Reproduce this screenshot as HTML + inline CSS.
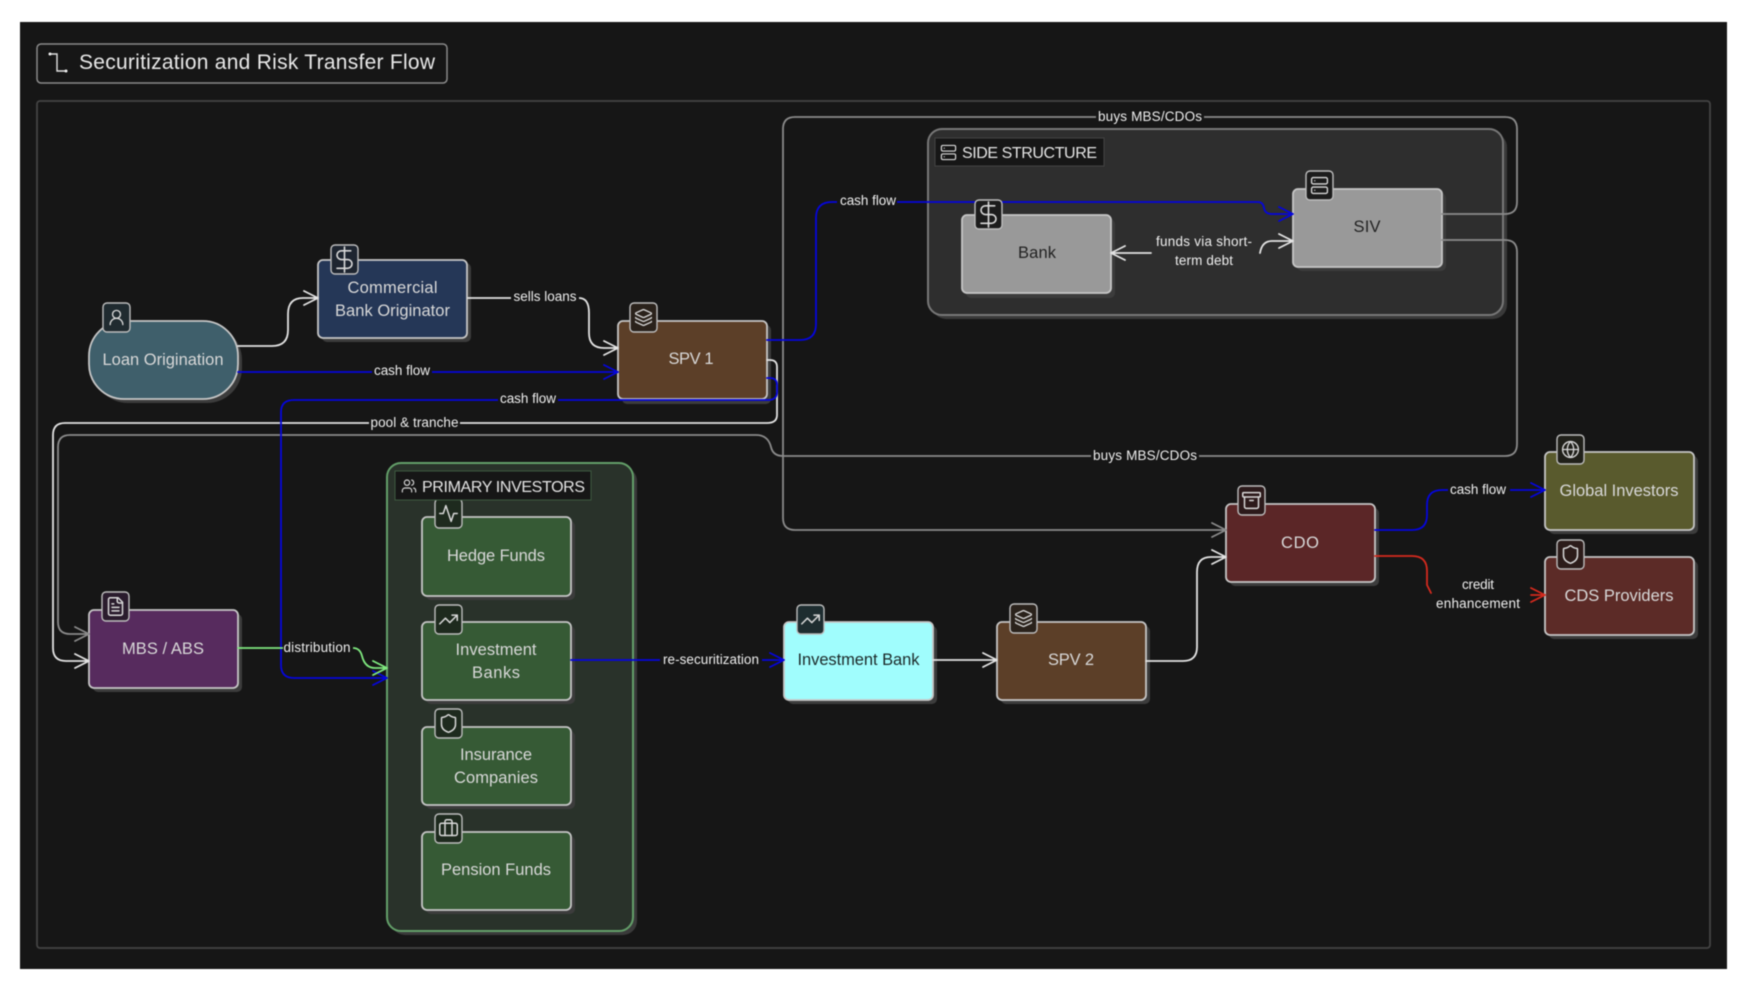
<!DOCTYPE html>
<html lang="en">
<head>
<meta charset="utf-8">
<title>Securitization and Risk Transfer Flow</title>
<style>
html,body{margin:0;padding:0;background:#fff;width:1746px;height:986px;overflow:hidden}
svg{display:block;filter:blur(.6px);font-family:"Liberation Sans",sans-serif}
.e{fill:none;stroke-width:1.800;stroke-linejoin:round;stroke-linecap:round}
.w{stroke:#e2e2e2}.g{stroke:#8a8a8a}.b{stroke:#0505dc}.gr{stroke:#7fe87f}.r{stroke:#d52a1e}
.sh{fill:#3c3c3c}
.n{stroke:#c6c6c6;stroke-width:1.800}
.t{font-size:16.500px;fill:#d8d8d8;text-anchor:middle}
.l{font-size:13.500px;fill:#eee;text-anchor:middle}
.lb{fill:#161616}
.i{fill:none;stroke:#d8d8d8;stroke-width:1.700;stroke-linecap:round;stroke-linejoin:round}
.bd{stroke:#bdbdbd;stroke-width:1.400}
</style>
</head>
<body>
<svg width="1746" height="986" viewBox="0 0 1746 986" xmlns="http://www.w3.org/2000/svg">
<defs>
<symbol id="user" viewBox="0 0 24 24"><circle cx="12" cy="8" r="5"/><path d="M20 21a8 8 0 0 0-16 0"/></symbol>
<symbol id="dollar" viewBox="0 0 24 24"><path d="M12 2v20"/><path d="M17 5H9.500a3.500 3.500 0 0 0 0 7h5a3.500 3.500 0 0 1 0 7H6"/></symbol>
<symbol id="layers" viewBox="0 0 24 24"><path d="M12.830 2.180a2 2 0 0 0-1.660 0L2.600 6.080a1 1 0 0 0 0 1.830l8.580 3.910a2 2 0 0 0 1.660 0l8.580-3.900a1 1 0 0 0 0-1.830z"/><path d="M2 12a1 1 0 0 0 .58.910l8.600 3.910a2 2 0 0 0 1.650 0l8.580-3.900A1 1 0 0 0 22 12"/><path d="M2 17a1 1 0 0 0 .58.910l8.600 3.910a2 2 0 0 0 1.650 0l8.580-3.900A1 1 0 0 0 22 17"/></symbol>
<symbol id="server" viewBox="0 0 24 24"><rect x="2" y="2" width="20" height="8" rx="2"/><rect x="2" y="14" width="20" height="8" rx="2"/><path d="M6 6h.01M6 18h.01"/></symbol>
<symbol id="activity" viewBox="0 0 24 24"><path d="M22 12h-4l-3 9L9 3l-3 9H2"/></symbol>
<symbol id="trend" viewBox="0 0 24 24"><path d="M22 7l-8.500 8.500-5-5L2 17"/><path d="M16 7h6v6"/></symbol>
<symbol id="shield" viewBox="0 0 24 24"><path d="M20 13c0 5-3.500 7.500-7.660 8.950a1 1 0 0 1-.67-.01C7.500 20.500 4 18 4 13V6a1 1 0 0 1 1-1c2 0 4.500-1.200 6.240-2.720a1.170 1.170 0 0 1 1.520 0C14.510 3.810 17 5 19 5a1 1 0 0 1 1 1z"/></symbol>
<symbol id="case" viewBox="0 0 24 24"><path d="M16 20V4a2 2 0 0 0-2-2h-4a2 2 0 0 0-2 2v16"/><rect x="2" y="6" width="20" height="14" rx="2"/></symbol>
<symbol id="file" viewBox="0 0 24 24"><path d="M15 2H6a2 2 0 0 0-2 2v16a2 2 0 0 0 2 2h12a2 2 0 0 0 2-2V7Z"/><path d="M14 2v4a2 2 0 0 0 2 2h4"/><path d="M10 9H8M16 13H8M16 17H8"/></symbol>
<symbol id="archive" viewBox="0 0 24 24"><rect x="2" y="3" width="20" height="5" rx="1"/><path d="M4 8v11a2 2 0 0 0 2 2h12a2 2 0 0 0 2-2V8"/><path d="M10 12h4"/></symbol>
<symbol id="globe" viewBox="0 0 24 24"><circle cx="12" cy="12" r="10"/><path d="M12 2a14.500 14.500 0 0 0 0 20 14.500 14.500 0 0 0 0-20"/><path d="M2 12h20"/></symbol>
<symbol id="users" viewBox="0 0 24 24"><path d="M16 21v-2a4 4 0 0 0-4-4H6a4 4 0 0 0-4 4v2"/><circle cx="9" cy="7" r="4"/><path d="M22 21v-2a4 4 0 0 0-3-3.870"/><path d="M16 3.130a4 4 0 0 1 0 7.750"/></symbol>
</defs>

<!-- panel -->
<rect x="20" y="22" width="1707" height="947" fill="#161616"/>
<rect x="37" y="44" width="410" height="39" rx="4" fill="#161616" stroke="#8a8a8a" stroke-width="1.500"/>
<path d="M50 54H57V71H66" fill="none" stroke="#e0e0e0" stroke-width="1.400"/>
<circle cx="50" cy="54" r="1.500" fill="#eee"/><circle cx="66" cy="71" r="1.500" fill="#eee"/>
<text x="79" y="69" font-size="21" fill="#e8e8e8" textLength="356" lengthAdjust="spacing">Securitization and Risk Transfer Flow</text>
<rect x="37" y="101" width="1673" height="847" rx="3" fill="none" stroke="#444" stroke-width="1.800"/>

<!-- groups -->
<rect x="932" y="133" width="575" height="186" rx="14" fill="#3a3a3a"/>
<rect x="928" y="129" width="575" height="186" rx="14" fill="#2e2e2e" stroke="#777" stroke-width="2"/>
<rect x="391" y="467" width="246" height="468" rx="14" fill="#3a3a3a"/>
<rect x="387" y="463" width="246" height="468" rx="14" fill="#29322a" stroke="#639f69" stroke-width="2"/>

<!-- shadows -->
<g class="sh">
<rect x="93" y="325" width="149" height="78" rx="35"/>
<rect x="322" y="263" width="149" height="79" rx="5"/>
<rect x="622" y="325" width="149" height="79" rx="5"/>
<rect x="966" y="219" width="149" height="79" rx="5"/>
<rect x="1297" y="193" width="149" height="78" rx="5"/>
<rect x="93" y="614" width="149" height="78" rx="5"/>
<rect x="426" y="521" width="149" height="79" rx="5"/>
<rect x="426" y="626" width="149" height="78" rx="5"/>
<rect x="426" y="731" width="149" height="78" rx="5"/>
<rect x="426" y="836" width="149" height="78" rx="5"/>
<rect x="788" y="626" width="149" height="78" rx="5"/>
<rect x="1001" y="626" width="149" height="78" rx="5"/>
<rect x="1230" y="508" width="149" height="78" rx="5"/>
<rect x="1549" y="456" width="149" height="78" rx="5"/>
<rect x="1549" y="561" width="149" height="78" rx="5"/>
</g>

<!-- nodes -->
<g>
<rect class="n" x="89" y="321" width="149" height="78" rx="35" fill="#3f5f6b"/>
<rect class="n" x="318" y="260" width="149" height="78" rx="5" fill="#253757"/>
<rect class="n" x="618" y="321" width="149" height="78" rx="5" fill="#5c3f28"/>
<rect class="n" x="962" y="215" width="149" height="78" rx="5" fill="#999"/>
<rect class="n" x="1293" y="189" width="149" height="78" rx="5" fill="#999"/>
<rect class="n" x="89" y="610" width="149" height="78" rx="5" fill="#572b5e"/>
<rect class="n" x="422" y="517" width="149" height="79" rx="5" fill="#365a35"/>
<rect class="n" x="422" y="622" width="149" height="78" rx="5" fill="#365a35"/>
<rect class="n" x="422" y="727" width="149" height="78" rx="5" fill="#365a35"/>
<rect class="n" x="422" y="832" width="149" height="78" rx="5" fill="#365a35"/>
<rect class="n" x="784" y="622" width="149" height="78" rx="5" fill="#a0fdfd"/>
<rect class="n" x="997" y="622" width="149" height="78" rx="5" fill="#5c3f28"/>
<rect class="n" x="1226" y="504" width="149" height="78" rx="5" fill="#5b2627"/>
<rect class="n" x="1545" y="452" width="149" height="78" rx="5" fill="#595a2d"/>
<rect class="n" x="1545" y="557" width="149" height="78" rx="5" fill="#5c2b27"/>
</g>

<!-- edges -->
<path class="e w" d="M238 346H272Q288 346 288 330V314Q288 298 303 298H318M304 291L318 298L304 305"/>
<path class="e w" d="M468 298H579Q589 298 589 313V333Q589 348 604 348H618M604 341L618 348L604 355"/>
<path class="e b" d="M238 372H618M604 365L618 372L604 379"/>
<path class="e w" d="M767 360H770Q777 360 777 367V415Q777 423 767 423H65Q53 423 53 435V648Q53 661 66 661H89M75 654L89 661L75 668"/>
<path class="e g" d="M1442 240H1505Q1517 240 1517 252V444Q1517 456 1505 456H783Q773 456 771 447Q768 435 756 435H70Q58 435 58 447V622Q58 634 70 634H89M75 627L89 634L75 641"/>
<path class="e g" d="M1442 214H1505Q1517 214 1517 202V129Q1517 117 1505 117H795Q783 117 783 129V518Q783 530 795 530H1226M1212 523L1226 530L1212 537"/>
<path class="e w" d="M1146 661H1183Q1197 661 1197 647V572Q1197 557 1211 557H1226M1212 550L1226 557L1212 564"/>
<path class="e b" d="M767 340H800Q816 340 816 324V218Q816 202 832 202H1258Q1263 202 1264 208Q1265 214 1272 214H1293M1279 207L1293 214L1279 221"/>
<path class="e b" d="M767 378H770Q777 378 777 385V392Q777 400 768 400H294Q281 400 281 412V665Q281 678 294 678H387M373 671L387 678L373 685"/>
<path class="e gr" d="M238 648H353Q360 648 362 656Q365 668 375 668H387M373 661L387 668L373 675"/>
<path class="e b" d="M571 660H784M770 653L784 660L770 667"/>
<path class="e w" d="M933 660H997M983 653L997 660L983 667"/>
<path class="e b" d="M1375 530H1412Q1427 530 1427 515V505Q1427 490 1442 490H1545M1531 483L1545 490L1531 497"/>
<path class="e r" d="M1375 556H1412Q1427 556 1427 571V585L1431 593M1531 595H1545M1531 588L1545 595L1531 602"/>
<path class="e w" d="M1151 253H1111M1125 246L1111 253L1125 260"/>
<path class="e w" d="M1260 253Q1262 241 1272 241H1293M1279 234L1293 241L1279 248"/>

<!-- badges -->
<g>
<rect class="bd" x="103" y="303" width="27" height="29" rx="4" fill="#202b30"/><use class="i" href="#user" x="107" y="308" width="19" height="19"/>
<rect class="bd" x="331" y="245" width="27" height="29" rx="4" fill="#1e2530"/><use class="i" style="stroke-width:1.300" href="#dollar" x="329.500" y="244.500" width="30" height="30"/>
<rect class="bd" x="630" y="303" width="27" height="29" rx="4" fill="#2a221b"/><use class="i" href="#layers" x="634" y="307" width="19" height="21"/>
<rect class="bd" x="975" y="200" width="27" height="29" rx="4" fill="#1c1c1c"/><use class="i" style="stroke-width:1.300" href="#dollar" x="973.500" y="199.500" width="30" height="30"/>
<rect class="bd" x="1306" y="171" width="27" height="29" rx="4" fill="#1c1c1c"/><use class="i" href="#server" x="1310" y="175" width="19" height="21"/>
<rect class="bd" x="102" y="592" width="27" height="29" rx="4" fill="#2a1c2d"/><use class="i" href="#file" x="105" y="596" width="21" height="21"/>
<rect class="bd" x="435" y="499" width="27" height="29" rx="4" fill="#1e2a1e"/><use class="i" href="#activity" x="438" y="503" width="21" height="21"/>
<rect class="bd" x="435" y="605" width="27" height="29" rx="4" fill="#1e2a1e"/><use class="i" href="#trend" x="438" y="609" width="21" height="21"/>
<rect class="bd" x="435" y="709" width="27" height="29" rx="4" fill="#1e2a1e"/><use class="i" href="#shield" x="438" y="713" width="21" height="21"/>
<rect class="bd" x="435" y="814" width="27" height="29" rx="4" fill="#1e2a1e"/><use class="i" href="#case" x="438" y="818" width="21" height="21"/>
<rect class="bd" x="797" y="605" width="27" height="29" rx="4" fill="#1e2d30"/><use class="i" href="#trend" x="800" y="609" width="21" height="21"/>
<rect class="bd" x="1010" y="604" width="27" height="29" rx="4" fill="#2a221b"/><use class="i" href="#layers" x="1014" y="608" width="19" height="21"/>
<rect class="bd" x="1238" y="486" width="27" height="29" rx="4" fill="#2c1a1b"/><use class="i" href="#archive" x="1241" y="490" width="21" height="21"/>
<rect class="bd" x="1557" y="435" width="27" height="29" rx="4" fill="#20201a"/><use class="i" href="#globe" x="1561" y="439" width="19" height="21"/>
<rect class="bd" x="1557" y="540" width="27" height="29" rx="4" fill="#2c1c1a"/><use class="i" href="#shield" x="1560" y="544" width="21" height="21"/>
</g>

<!-- group labels -->
<rect x="935" y="138" width="169" height="28" fill="#161616" stroke="#444" stroke-width="1"/>
<use class="i" href="#server" x="940" y="144" width="17" height="17"/>
<text x="962" y="158" font-size="16" fill="#e4e4e4" textLength="135" lengthAdjust="spacing">SIDE STRUCTURE</text>
<rect x="395" y="471" width="196" height="29" fill="#161616" stroke="#3d5a40" stroke-width="1"/>
<use class="i" href="#users" x="401" y="478" width="16" height="16"/>
<text x="422" y="492" font-size="16" fill="#e4e4e4" textLength="163" lengthAdjust="spacing">PRIMARY INVESTORS</text>

<!-- node text -->
<g>
<text class="t" x="163" y="365" textLength="121" lengthAdjust="spacing">Loan Origination</text>
<text class="t" x="392.500" y="293" textLength="90" lengthAdjust="spacing">Commercial</text>
<text class="t" x="392.500" y="316" textLength="115" lengthAdjust="spacing">Bank Originator</text>
<text class="t" x="691" y="364" textLength="45" lengthAdjust="spacing">SPV 1</text>
<text class="t" x="1037" y="258" textLength="38" lengthAdjust="spacing" style="fill:#222">Bank</text>
<text class="t" x="1367" y="232" textLength="27" lengthAdjust="spacing" style="fill:#222">SIV</text>
<text class="t" x="163" y="654" textLength="82" lengthAdjust="spacing">MBS / ABS</text>
<text class="t" x="496" y="561" textLength="98" lengthAdjust="spacing">Hedge Funds</text>
<text class="t" x="496" y="655" textLength="81" lengthAdjust="spacing">Investment</text>
<text class="t" x="496" y="678" textLength="48" lengthAdjust="spacing">Banks</text>
<text class="t" x="496" y="760" textLength="72" lengthAdjust="spacing">Insurance</text>
<text class="t" x="496" y="783" textLength="84" lengthAdjust="spacing">Companies</text>
<text class="t" x="496" y="875" textLength="110" lengthAdjust="spacing">Pension Funds</text>
<text class="t" x="858.500" y="665" textLength="122" lengthAdjust="spacing" style="fill:#1c2a2a">Investment Bank</text>
<text class="t" x="1071" y="665" textLength="46" lengthAdjust="spacing">SPV 2</text>
<text class="t" x="1300" y="548" textLength="38" lengthAdjust="spacing">CDO</text>
<text class="t" x="1619" y="496" textLength="119" lengthAdjust="spacing">Global Investors</text>
<text class="t" x="1619" y="601" textLength="109" lengthAdjust="spacing">CDS Providers</text>
</g>

<!-- edge labels -->
<g>
<rect class="lb" x="511" y="288" width="68" height="19"/><text class="l" x="545" y="301" textLength="63" lengthAdjust="spacing">sells loans</text>
<rect class="lb" x="372" y="362" width="60" height="19"/><text class="l" x="402" y="375" textLength="56" lengthAdjust="spacing">cash flow</text>
<rect class="lb" x="498" y="390" width="60" height="19"/><text class="l" x="528" y="403" textLength="56" lengthAdjust="spacing">cash flow</text>
<rect class="lb" x="837" y="191" width="60" height="19"/><text class="l" x="868" y="205" textLength="56" lengthAdjust="spacing">cash flow</text>
<rect class="lb" x="369" y="413" width="91" height="19"/><text class="l" x="414.500" y="427" textLength="88" lengthAdjust="spacing">pool &amp; tranche</text>
<rect class="lb" x="1096" y="107" width="108" height="19"/><text class="l" x="1150" y="121" textLength="104" lengthAdjust="spacing">buys MBS/CDOs</text>
<rect class="lb" x="1091" y="446" width="108" height="19"/><text class="l" x="1145" y="460" textLength="104" lengthAdjust="spacing">buys MBS/CDOs</text>
<rect class="lb" x="283" y="638" width="70" height="19"/><text class="l" x="317" y="652" textLength="67" lengthAdjust="spacing">distribution</text>
<rect class="lb" x="660" y="650" width="102" height="19"/><text class="l" x="711" y="664" textLength="96" lengthAdjust="spacing">re-securitization</text>
<rect class="lb" x="1448" y="480" width="62" height="19"/><text class="l" x="1478" y="494" textLength="56" lengthAdjust="spacing">cash flow</text>
<text class="l" x="1204" y="246" textLength="96" lengthAdjust="spacing">funds via short-</text>
<text class="l" x="1204" y="265" textLength="58" lengthAdjust="spacing">term debt</text>
<text class="l" x="1478" y="589" textLength="32" lengthAdjust="spacing">credit</text>
<text class="l" x="1478" y="608" textLength="84" lengthAdjust="spacing">enhancement</text>
</g>
</svg>
</body>
</html>
